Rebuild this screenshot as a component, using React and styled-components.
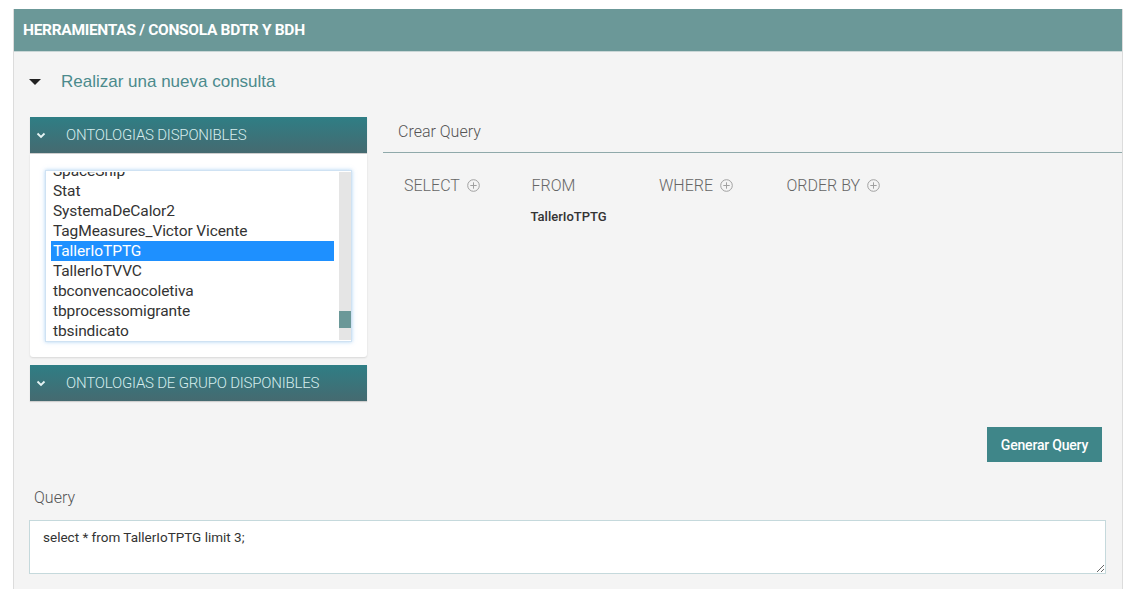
import React from "react";
import styled, { createGlobalStyle } from "styled-components";

const GlobalStyle = createGlobalStyle`
  html, body {
    margin: 0;
    padding: 0;
    background: #ffffff;
    font-family: Roboto, "Liberation Sans", sans-serif;
  }
`;

const Page = styled.div`
  padding: 9px 12px 0 13px;
`;

const Panel = styled.div`
  border: 1px solid #dcdcdc;
  border-top: none;
  background: #f4f4f4;
  height: 580px;
`;

const PanelHeader = styled.div`
  height: 42px;
  background: #6b9898;
  border-bottom: 1px solid #c9d6d6;
  display: flex;
  align-items: center;
  padding: 0 9px;
  color: #ffffff;
  font-weight: 700;
  font-size: 15.5px;
  letter-spacing: -0.3px;
`;

const PanelBody = styled.div`
  padding: 0 0 20px 16px;
`;

const CollapseRow = styled.div`
  margin-top: 17px;
  height: 26px;
  display: flex;
  align-items: center;
  gap: 20px;
  margin-left: -1px;
`;

const Caret = styled.span`
  width: 0;
  height: 0;
  border-left: 6px solid transparent;
  border-right: 6px solid transparent;
  border-top: 6px solid #222;
`;

const CollapseTitle = styled.span`
  font-family: "Liberation Sans", Arial, sans-serif;
  font-size: 17px;
  color: #4b8a8c;
`;

const Columns = styled.div`
  margin-top: 22px;
  display: flex;
  gap: 16px;
`;

const LeftCol = styled.div`
  width: 337px;
  flex: none;
`;

const RightCol = styled.div`
  flex: 1;
`;

const AccHeader = styled.div`
  height: 36px;
  margin-top: ${(p) => (p.$gap ? "8px" : "0")};
  background: linear-gradient(#2f7e85, #456a70);
  display: flex;
  align-items: center;
  padding-left: 6px;
  gap: 20px;
  color: #d6eeee;
  font-weight: 300;
  font-size: 15px;
  letter-spacing: -0.2px;
  box-shadow: 0 1px 1px rgba(0, 0, 0, 0.15);
`;

const AccBody = styled.div`
  margin-top: 1px;
  height: 203px;
  box-sizing: border-box;
  background: #ffffff;
  border-radius: 0 0 3px 3px;
  box-shadow: 0 1px 2px rgba(0, 0, 0, 0.12);
  padding: 16px 15px;
`;

const ListBox = styled.div`
  height: 172px;
  box-sizing: border-box;
  border: 1px solid #cfe2f3;
  box-shadow: 0 0 4px rgba(110, 175, 235, 0.55);
  padding: 1px 0 1px 5px;
  display: flex;
  gap: 5px;
  background: #fff;
`;

const ListViewport = styled.div`
  flex: 1;
  overflow: hidden;
`;

const ListItems = styled.div`
  margin-top: ${(p) => p.$offset}px;
`;

const ListItem = styled.div`
  height: 20px;
  line-height: 20px;
  padding-left: 2px;
  font-size: 15.5px;
  letter-spacing: -0.1px;
  color: ${(p) => (p.$selected ? "#ffffff" : "#333333")};
  background: ${(p) => (p.$selected ? "#1e90ff" : "transparent")};
  white-space: nowrap;
`;

const ScrollTrack = styled.div`
  width: 12px;
  background: #e5e5e5;
  display: flex;
  flex-direction: column;
`;

const ScrollThumb = styled.div`
  margin-top: ${(p) => p.$top}px;
  height: 17px;
  background: #6b9898;
`;

const TabBar = styled.div`
  height: 36px;
  border-bottom: 1px solid #8fa9aa;
  display: flex;
  align-items: center;
  padding-left: 15px;
  padding-bottom: 7px;
  box-sizing: border-box;
  font-weight: 300;
  font-size: 16px;
  color: #555555;
`;

const ClauseRow = styled.div`
  margin-top: 22px;
  padding-left: 21px;
  display: flex;
`;

const Clause = styled.div`
  width: 127.5px;
  flex: none;
`;

const ClauseLabel = styled.div`
  height: 20px;
  display: flex;
  align-items: center;
  gap: 7px;
  font-weight: 300;
  font-size: 16px;
  color: #666666;
`;

const ClauseValue = styled.div`
  margin-top: 14px;
  margin-left: -1px;
  font-weight: 500;
  font-size: 13px;
  color: #333333;
`;

const ButtonRow = styled.div`
  margin-top: 26px;
  display: flex;
  justify-content: flex-end;
  padding-right: 20px;
`;

const Button = styled.button`
  width: 115px;
  height: 35px;
  border: none;
  background: #3f8689;
  color: #ffffff;
  font-family: Roboto, "Liberation Sans", sans-serif;
  font-weight: 500;
  font-size: 14px;
  letter-spacing: -0.2px;
`;

const QueryLabel = styled.div`
  margin-top: 26px;
  padding-left: 4px;
  line-height: 20px;
  font-weight: 300;
  font-size: 16px;
  color: #555555;
`;

const QueryArea = styled.textarea`
  display: block;
  margin: 12px 16px 0 -1px;
  width: calc(100% - 15px);
  height: 54px;
  box-sizing: border-box;
  border: 1px solid #c5d9dc;
  background: #ffffff;
  padding: 8px 13px;
  font-family: Roboto, "Liberation Sans", sans-serif;
  font-size: 13.5px;
  color: #333333;
  resize: vertical;
  outline: none;
`;

const Chevron = () => (
  <svg width="10" height="7" viewBox="0 0 10 7">
    <path d="M1.5 1.5 L5 5 L8.5 1.5" fill="none" stroke="#e6f4f4" strokeWidth="1.8" />
  </svg>
);

const PlusCircle = () => (
  <svg width="13" height="13" viewBox="0 0 13 13">
    <circle cx="6.5" cy="6.5" r="5.8" fill="none" stroke="#a0a0a0" strokeWidth="1" />
    <path d="M6.5 3.3 V9.7 M3.3 6.5 H9.7" stroke="#a0a0a0" strokeWidth="1" />
  </svg>
);

const ontologies = [
  "SpaceShip",
  "Stat",
  "SystemaDeCalor2",
  "TagMeasures_Victor Vicente",
  "TallerIoTPTG",
  "TallerIoTVVC",
  "tbconvencaocoletiva",
  "tbprocessomigrante",
  "tbsindicato",
];

const clauses = [
  { label: "SELECT", plus: true },
  { label: "FROM", value: "TallerIoTPTG" },
  { label: "WHERE", plus: true },
  { label: "ORDER BY", plus: true },
];

function App() {
  return (
    <>
      <GlobalStyle />
      <Page>
        <Panel>
          <PanelHeader>HERRAMIENTAS / CONSOLA BDTR Y BDH</PanelHeader>
          <PanelBody>
            <CollapseRow>
              <Caret />
              <CollapseTitle>Realizar una nueva consulta</CollapseTitle>
            </CollapseRow>
            <Columns>
              <LeftCol>
                <AccHeader>
                  <Chevron />
                  ONTOLOGIAS DISPONIBLES
                </AccHeader>
                <AccBody>
                  <ListBox>
                    <ListViewport>
                      <ListItems $offset={-11}>
                        {ontologies.map((o) => (
                          <ListItem key={o} $selected={o === "TallerIoTPTG"}>
                            {o}
                          </ListItem>
                        ))}
                      </ListItems>
                    </ListViewport>
                    <ScrollTrack>
                      <ScrollThumb $top={139} />
                    </ScrollTrack>
                  </ListBox>
                </AccBody>
                <AccHeader $gap>
                  <Chevron />
                  ONTOLOGIAS DE GRUPO DISPONIBLES
                </AccHeader>
              </LeftCol>
              <RightCol>
                <TabBar>Crear Query</TabBar>
                <ClauseRow>
                  {clauses.map((c) => (
                    <Clause key={c.label}>
                      <ClauseLabel>
                        {c.label}
                        {c.plus && <PlusCircle />}
                      </ClauseLabel>
                      {c.value && <ClauseValue>{c.value}</ClauseValue>}
                    </Clause>
                  ))}
                </ClauseRow>
              </RightCol>
            </Columns>
            <ButtonRow>
              <Button>Generar Query</Button>
            </ButtonRow>
            <QueryLabel>Query</QueryLabel>
            <QueryArea defaultValue="select * from TallerIoTPTG limit 3;" />
          </PanelBody>
        </Panel>
      </Page>
    </>
  );
}

export default App;
